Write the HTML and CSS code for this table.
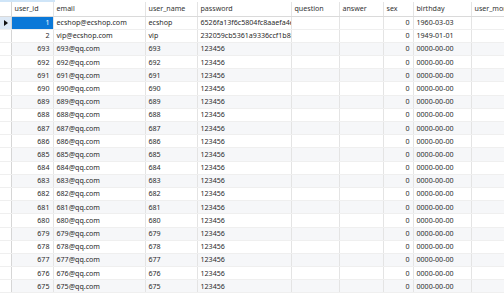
FILE: index.html
```html
<!DOCTYPE html>
<html lang="en">
<head>
    <meta charset="UTF-8">
    <title>users</title>
    <link rel="stylesheet" href="styles.css">
</head>
<body>
    <div class="tab-strip"></div>
    <table class="grid">
        <colgroup>
            <col class="c-ind">
            <col class="c-id">
            <col class="c-email">
            <col class="c-name">
            <col class="c-pass">
            <col class="c-q">
            <col class="c-a">
            <col class="c-sex">
            <col class="c-birth">
            <col class="c-more">
        </colgroup>
        <thead>
            <tr>
                <th class="ind"></th>
                <th>user_id</th>
                <th>email</th>
                <th>user_name</th>
                <th>password</th>
                <th>question</th>
                <th>answer</th>
                <th>sex</th>
                <th>birthday</th>
                <th class="last">user_money</th>
            </tr>
        </thead>
        <tbody>
            <tr class="current">
                <td class="ind"><span class="arrow"></span></td>
                <td class="num selected">1</td>
                <td>ecshop@ecshop.com</td>
                <td>ecshop</td>
                <td>6526fa13f6c5804fc8aaefa4ee29d1c3</td>
                <td></td>
                <td></td>
                <td class="num">0</td>
                <td>1960-03-03</td>
                <td class="last"></td>
            </tr>
            <tr>
                <td class="ind"></td>
                <td class="num">2</td>
                <td>vip@ecshop.com</td>
                <td>vip</td>
                <td>232059cb5361a9336ccf1b8c2ba7657a</td>
                <td></td>
                <td></td>
                <td class="num">0</td>
                <td>1949-01-01</td>
                <td class="last"></td>
            </tr>
            <tr><td class="ind"></td><td class="num">693</td><td>693@qq.com</td><td>693</td><td>123456</td><td></td><td></td><td class="num">0</td><td>0000-00-00</td><td class="last"></td></tr>
            <tr><td class="ind"></td><td class="num">692</td><td>692@qq.com</td><td>692</td><td>123456</td><td></td><td></td><td class="num">0</td><td>0000-00-00</td><td class="last"></td></tr>
            <tr><td class="ind"></td><td class="num">691</td><td>691@qq.com</td><td>691</td><td>123456</td><td></td><td></td><td class="num">0</td><td>0000-00-00</td><td class="last"></td></tr>
            <tr><td class="ind"></td><td class="num">690</td><td>690@qq.com</td><td>690</td><td>123456</td><td></td><td></td><td class="num">0</td><td>0000-00-00</td><td class="last"></td></tr>
            <tr><td class="ind"></td><td class="num">689</td><td>689@qq.com</td><td>689</td><td>123456</td><td></td><td></td><td class="num">0</td><td>0000-00-00</td><td class="last"></td></tr>
            <tr><td class="ind"></td><td class="num">688</td><td>688@qq.com</td><td>688</td><td>123456</td><td></td><td></td><td class="num">0</td><td>0000-00-00</td><td class="last"></td></tr>
            <tr><td class="ind"></td><td class="num">687</td><td>687@qq.com</td><td>687</td><td>123456</td><td></td><td></td><td class="num">0</td><td>0000-00-00</td><td class="last"></td></tr>
            <tr><td class="ind"></td><td class="num">686</td><td>686@qq.com</td><td>686</td><td>123456</td><td></td><td></td><td class="num">0</td><td>0000-00-00</td><td class="last"></td></tr>
            <tr><td class="ind"></td><td class="num">685</td><td>685@qq.com</td><td>685</td><td>123456</td><td></td><td></td><td class="num">0</td><td>0000-00-00</td><td class="last"></td></tr>
            <tr><td class="ind"></td><td class="num">684</td><td>684@qq.com</td><td>684</td><td>123456</td><td></td><td></td><td class="num">0</td><td>0000-00-00</td><td class="last"></td></tr>
            <tr><td class="ind"></td><td class="num">683</td><td>683@qq.com</td><td>683</td><td>123456</td><td></td><td></td><td class="num">0</td><td>0000-00-00</td><td class="last"></td></tr>
            <tr><td class="ind"></td><td class="num">682</td><td>682@qq.com</td><td>682</td><td>123456</td><td></td><td></td><td class="num">0</td><td>0000-00-00</td><td class="last"></td></tr>
            <tr><td class="ind"></td><td class="num">681</td><td>681@qq.com</td><td>681</td><td>123456</td><td></td><td></td><td class="num">0</td><td>0000-00-00</td><td class="last"></td></tr>
            <tr><td class="ind"></td><td class="num">680</td><td>680@qq.com</td><td>680</td><td>123456</td><td></td><td></td><td class="num">0</td><td>0000-00-00</td><td class="last"></td></tr>
            <tr><td class="ind"></td><td class="num">679</td><td>679@qq.com</td><td>679</td><td>123456</td><td></td><td></td><td class="num">0</td><td>0000-00-00</td><td class="last"></td></tr>
            <tr><td class="ind"></td><td class="num">678</td><td>678@qq.com</td><td>678</td><td>123456</td><td></td><td></td><td class="num">0</td><td>0000-00-00</td><td class="last"></td></tr>
            <tr><td class="ind"></td><td class="num">677</td><td>677@qq.com</td><td>677</td><td>123456</td><td></td><td></td><td class="num">0</td><td>0000-00-00</td><td class="last"></td></tr>
            <tr><td class="ind"></td><td class="num">676</td><td>676@qq.com</td><td>676</td><td>123456</td><td></td><td></td><td class="num">0</td><td>0000-00-00</td><td class="last"></td></tr>
            <tr><td class="ind"></td><td class="num">675</td><td>675@qq.com</td><td>675</td><td>123456</td><td></td><td></td><td class="num">0</td><td>0000-00-00</td><td class="last"></td></tr>
        </tbody>
    </table>
</body>
</html>
```

FILE: styles.css
```css
* {
    margin: 0;
    padding: 0;
    box-sizing: border-box;
}

body {
    background: #fff;
    color: #2a2a2a;
    font-family: 'Noto Sans', 'Liberation Sans', sans-serif;
    font-size: 7.1px;
    overflow: hidden;
    width: 504px;
    height: 296px;
}

.tab-strip {
    width: 55px;
    height: 2px;
    background: #cfe5f8;
}

.grid {
    table-layout: fixed;
    border-collapse: collapse;
    width: 504px;
}

.c-ind { width: 11px; }
.c-id { width: 42px; }
.c-email { width: 92px; }
.c-name { width: 52px; }
.c-pass { width: 94px; }
.c-q { width: 48px; }
.c-a { width: 44px; }
.c-sex { width: 30px; }
.c-birth { width: 58px; }
.c-more { width: 33px; }

.grid th,
.grid td {
    white-space: nowrap;
    overflow: hidden;
    padding: 0 3px;
    border-right: 1px solid #e4e4e4;
    text-align: left;
    line-height: 1;
}

.grid th.last,
.grid td.last {
    border-right: none;
}

.grid th {
    height: 14px;
    font-weight: normal;
    color: #333;
    background: #fff;
    border-bottom: 1px solid #dadada;
}

.grid td {
    height: 13.2px;
    border-bottom: 1px solid #efefef;
}

.grid tbody tr:nth-child(odd) td {
    background: #f6f7f9;
}

.grid tbody tr.current td {
    background: #fff;
}

.grid td.num {
    text-align: right;
}

.grid .ind {
    padding: 0;
    border-right: 1px solid #d6d6d6;
    background: #fff;
}

.grid tbody tr:nth-child(odd) td.ind {
    background: #fff;
}

.grid tbody tr.current td.ind {
    background: #dde9f6;
}

.grid tbody tr.current td.selected {
    background: #0a78d8;
    color: #fff;
}

.arrow {
    display: block;
    width: 0;
    height: 0;
    margin-left: 4px;
    border-left: 4px solid #111;
    border-top: 3px solid transparent;
    border-bottom: 3px solid transparent;
}
```
